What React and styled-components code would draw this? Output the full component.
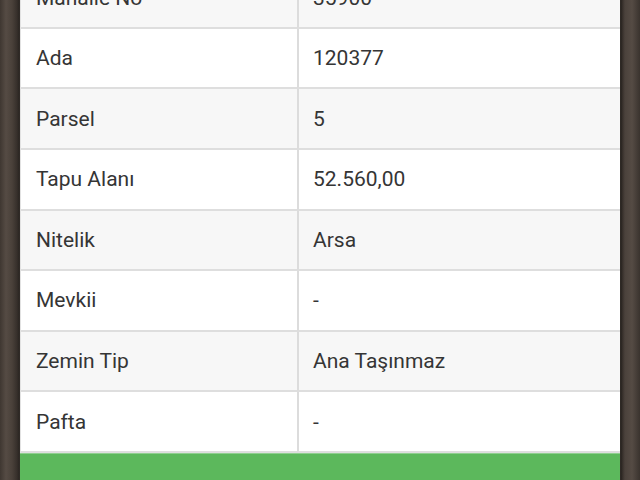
import React from 'react';
import styled, { createGlobalStyle } from 'styled-components';

const GlobalStyle = createGlobalStyle`
  html, body {
    margin: 0;
    padding: 0;
    height: 100%;
    overflow: hidden;
  }
  body {
    font-family: Roboto, 'Liberation Sans', Arial, sans-serif;
    background: #48403a;
  }
`;

const Screen = styled.div`
  width: 640px;
  height: 480px;
  overflow: hidden;
  padding: 0 20px;
  box-sizing: border-box;
  background:
    linear-gradient(90deg, #3f3731 0px, #554b44 6px, #4a413a 12px, #2f2925 19px, transparent 20px),
    linear-gradient(270deg, #3a332e 0px, #554b44 8px, #4b423c 15px, #2c2622 19px, transparent 20px),
    #48403a;
`;

const Card = styled.div`
  margin-top: -31.8px;
  background: #fff;
  box-shadow: 0 0 2px rgba(0, 0, 0, 0.6);
`;

const Table = styled.div`
  display: grid;
  grid-template-columns: 276px 1fr;
  border-left: 1px solid #e2e2e2;
`;

const Cell = styled.div`
  height: 60.6px;
  box-sizing: border-box;
  display: flex;
  align-items: center;
  padding-left: ${p => (p.$value ? '14px' : '15px')};
  font-size: 21px;
  color: #353535;
  background: ${p => (p.$shade ? '#f7f7f7' : '#ffffff')};
  border-bottom: 2px solid #dedede;
  border-left: ${p => (p.$value ? '2px solid #dcdcdc' : 'none')};
`;

const ActionBar = styled.div`
  height: 80px;
  background: #5cb85c;
  border-top: 1px solid #8fcf8f;
`;

const rows = [
  ['Mahalle No', '35900'],
  ['Ada', '120377'],
  ['Parsel', '5'],
  ['Tapu Alanı', '52.560,00'],
  ['Nitelik', 'Arsa'],
  ['Mevkii', '-'],
  ['Zemin Tip', 'Ana Taşınmaz'],
  ['Pafta', '-'],
];

export default function App() {
  return (
    <>
      <GlobalStyle />
      <Screen>
        <Card>
          <Table>
            {rows.map(([label, value], i) => (
              <React.Fragment key={label}>
                <Cell $shade={i % 2 === 0}>{label}</Cell>
                <Cell $shade={i % 2 === 0} $value>{value}</Cell>
              </React.Fragment>
            ))}
          </Table>
          <ActionBar />
        </Card>
      </Screen>
    </>
  );
}
